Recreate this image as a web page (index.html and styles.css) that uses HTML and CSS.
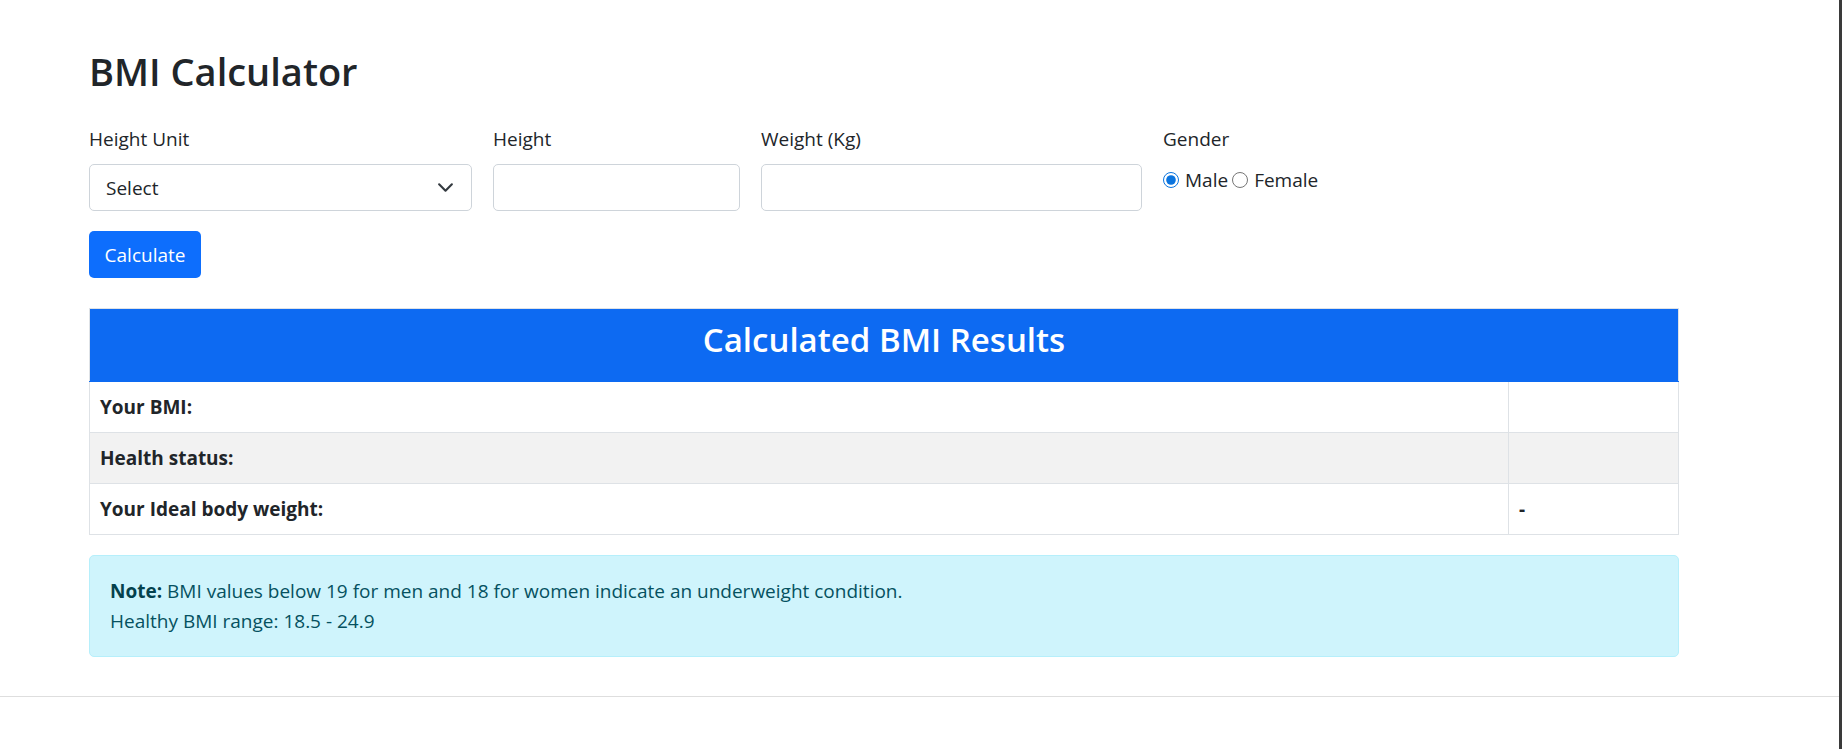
FILE: index.html
```html
<!DOCTYPE html>
<html lang="en">
<head>
<meta charset="utf-8">
<title>BMI Calculator</title>
<link rel="stylesheet" href="styles.css">
</head>
<body>
<div class="screen">
  <div class="content">
    <main class="page">
      <h1 class="title">BMI Calculator</h1>
      <form class="calc">
        <div class="fields">
          <div class="field">
            <label class="label" for="unit">Height Unit</label>
            <div class="select-wrap">
              <select id="unit" class="control select"><option>Select</option></select>
              <svg class="chevron" viewBox="0 0 16 16" width="17" height="17" aria-hidden="true"><path d="M2 5l6 6 6-6" fill="none" stroke="#343a40" stroke-width="2" stroke-linecap="round" stroke-linejoin="round"/></svg>
            </div>
          </div>
          <div class="field">
            <label class="label" for="height">Height</label>
            <input id="height" class="control" type="text">
          </div>
          <div class="field">
            <label class="label" for="weight">Weight (Kg)</label>
            <input id="weight" class="control" type="text">
          </div>
          <div class="field">
            <span class="label">Gender</span>
            <div class="radios">
              <label class="radio"><input type="radio" name="gender" checked> Male</label>
              <label class="radio"><input type="radio" name="gender"> Female</label>
            </div>
          </div>
        </div>
        <button type="button" class="btn">Calculate</button>
      </form>

      <table class="results">
        <colgroup><col class="col-label"><col class="col-value"></colgroup>
        <thead>
          <tr><th colspan="2" class="results-head"><h3 class="results-title">Calculated BMI Results</h3></th></tr>
        </thead>
        <tbody>
          <tr><td class="key">Your BMI:</td><td class="val"></td></tr>
          <tr class="striped"><td class="key">Health status:</td><td class="val"></td></tr>
          <tr><td class="key">Your Ideal body weight:</td><td class="val">-</td></tr>
        </tbody>
      </table>

      <div class="note">
        <div><strong>Note:</strong> BMI values below 19 for men and 18 for women indicate an underweight condition.</div>
        <div>Healthy BMI range: 18.5 - 24.9</div>
      </div>
    </main>
    <hr class="rule">
  </div>
  <div class="edge"></div>
</div>
</body>
</html>
```

FILE: styles.css
```css
* { box-sizing: border-box; }
html, body { margin: 0; padding: 0; background: #fff; }
body {
  font-family: "Open Sans", "Noto Sans", sans-serif;
  font-size: 19px;
  line-height: 30px;
  color: #212529;
}
.screen {
  display: flex;
  height: 749px;
  overflow: hidden;
}
.content {
  flex: 1;
  display: flex;
  flex-direction: column;
}
.edge {
  width: 3px;
  background: #3a3a3a;
}
.page {
  padding: 47px 0 0 89px;
  width: 1679px;
}
.title {
  margin: 0;
  font-size: 38px;
  line-height: 48px;
  font-weight: 600;
  color: #212529;
}
.calc { margin-top: 29px; }
.fields {
  display: grid;
  grid-template-columns: 383px 247px 381px auto;
  column-gap: 21px;
}
.field { display: flex; flex-direction: column; }
.label {
  display: block;
  line-height: 30px;
  margin-bottom: 10px;
}
.control {
  height: 47px;
  width: 100%;
  border: 1px solid #ced4da;
  border-radius: 5px;
  background: #fff;
  font: inherit;
  color: #212529;
  padding: 0 15px;
}
.select-wrap { position: relative; }
.select {
  appearance: none;
  -webkit-appearance: none;
  padding-left: 16px;
}
.chevron {
  position: absolute;
  right: 18px;
  top: 15px;
  pointer-events: none;
}
.radios {
  display: flex;
  align-items: center;
  gap: 4px;
  height: 30px;
  margin-top: 1px;
}
.radio {
  display: flex;
  align-items: center;
  gap: 6px;
}
.radio input {
  width: 16px;
  height: 16px;
  margin: 0;
  accent-color: #0b74de;
}
.btn {
  display: block;
  margin-top: 20px;
  height: 47px;
  width: 112px;
  padding: 0;
  border: 0;
  border-radius: 5px;
  background: #0d6efd;
  color: #fff;
  font: inherit;
}
.results {
  margin-top: 30px;
  width: 1590px;
  border-collapse: collapse;
  table-layout: fixed;
}
.col-value { width: 170px; }
.results th, .results td {
  border: 1px solid #dee2e6;
  padding: 10px;
  line-height: 30px;
  text-align: left;
}
.results-head {
  background: #0d6af2;
  border-color: #dee2e6 #dee2e6 #0d6af2 #dee2e6 !important;
  text-align: center !important;
  padding: 10px !important;
}
.results-title {
  margin: 0 0 10px;
  font-size: 33px;
  line-height: 42px;
  font-weight: 600;
  color: #fff;
  text-align: center;
}
.key { font-weight: 700; }
.val { font-weight: 700; }
.striped td { background: #f2f2f2; }
.note {
  margin-top: 20px;
  width: 1590px;
  padding: 20px;
  background: #cff4fc;
  border: 1px solid #b6effb;
  border-radius: 5px;
  color: #055160;
}
.note strong { color: #04414d; font-weight: 700; }
.rule {
  margin: 39px 0 0;
  border: 0;
  border-top: 1px solid #dedede;
  width: 100%;
}
```
